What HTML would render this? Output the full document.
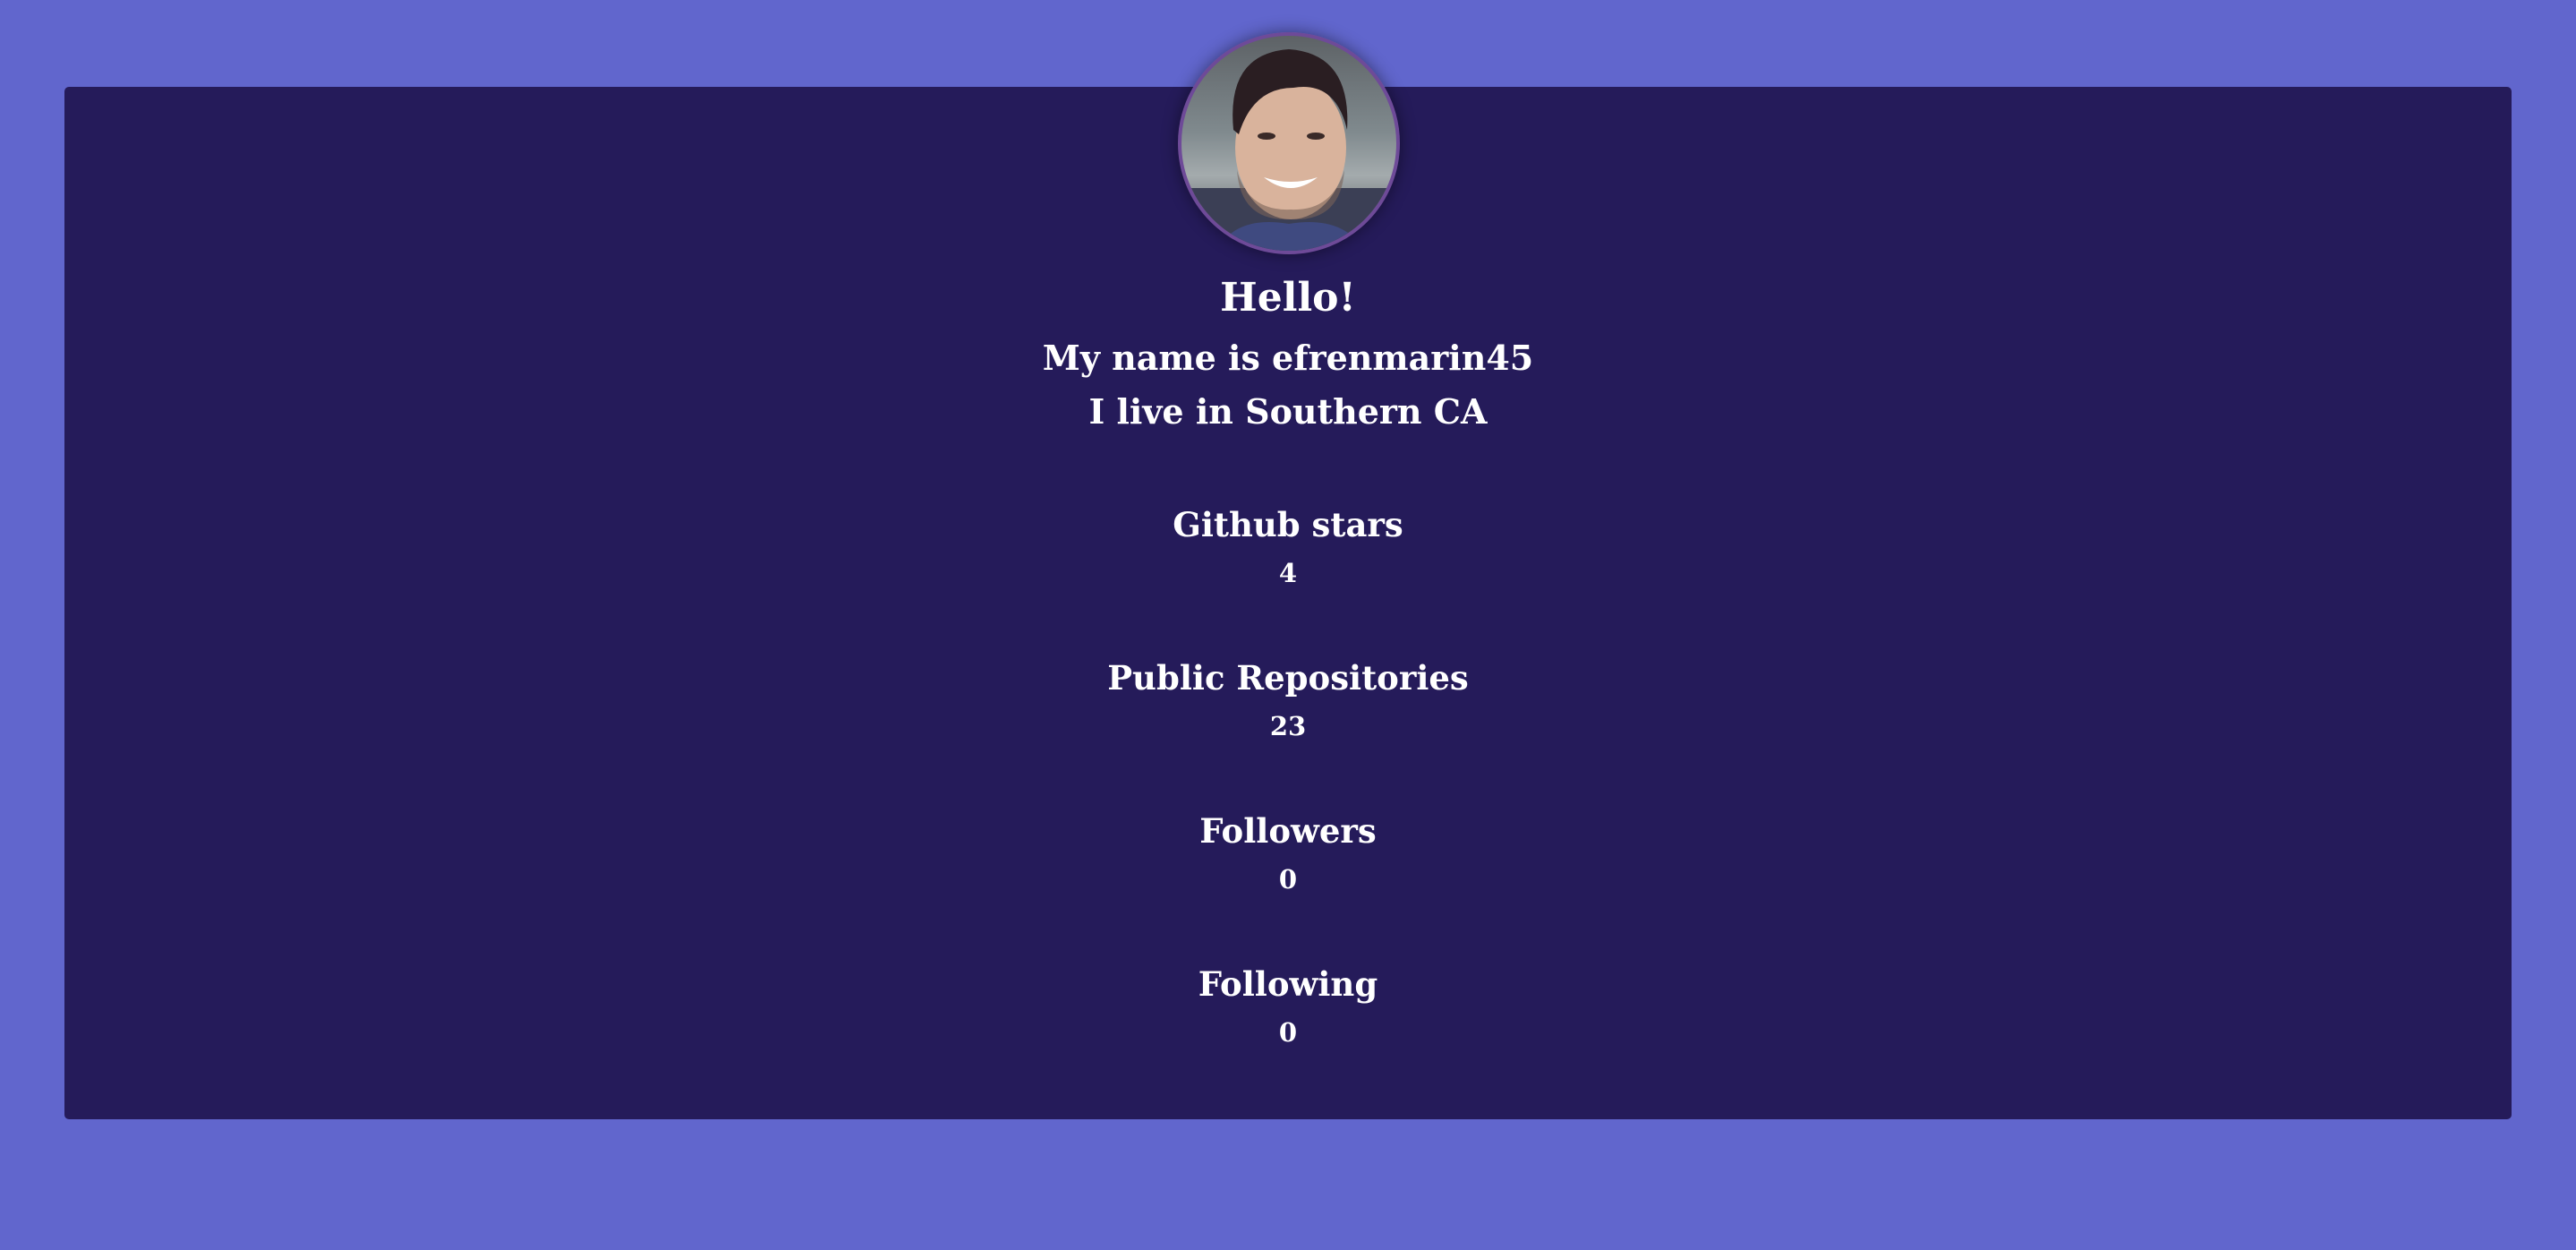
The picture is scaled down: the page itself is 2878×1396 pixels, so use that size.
<!DOCTYPE html>
<html><head><meta charset="utf-8"><style>
html,body{margin:0;padding:0}
body{width:2878px;height:1396px;background:#6166cd;position:relative;overflow:hidden;font-family:"DejaVu Serif","Liberation Serif",serif;font-weight:bold;color:#fff}
.card{position:absolute;left:72px;top:97px;width:2734px;height:1153px;background:#251b5a;border-radius:5px}
.av{position:absolute;left:1316px;top:36px;width:240px;height:240px;border:4px solid #6e4a98;border-radius:50%;overflow:hidden;box-shadow:0 0 18px rgba(0,0,0,.45);background:linear-gradient(180deg,#5d6266 0%,#808a8e 45%,#a4abad 65%,#3e4048 100%)}
.l{position:absolute;left:0;width:2878px;text-align:center;line-height:1;white-space:nowrap}
</style></head><body>
<div class="card"></div>
<div class="av">
<svg width="240" height="240" viewBox="0 0 240 240">
<rect x="0" y="170" width="240" height="70" fill="#3b3f55"/>
<path d="M40 240 Q60 200 120 210 Q180 200 205 240Z" fill="#3f4a80"/>
<ellipse cx="122" cy="125" rx="62" ry="80" fill="#d9b39c"/>
<path d="M58 105 Q50 20 120 15 Q190 20 185 105 Q172 50 125 58 Q80 58 64 110Z" fill="#2a1e22"/>
<ellipse cx="95" cy="112" rx="10" ry="4" fill="#3a2a28"/>
<ellipse cx="150" cy="112" rx="10" ry="4" fill="#3a2a28"/>
<path d="M92 158 Q122 182 152 158 Q122 168 92 158Z" fill="#fff"/>
<path d="M62 150 Q66 208 122 205 Q178 208 182 150 Q168 196 122 194 Q74 196 62 150Z" fill="#7a6258" opacity=".6"/>
</svg>
</div>
<div class="l" style="top:311px;font-size:44px">Hello!</div>
<div class="l" style="top:381px;font-size:38px">My name is efrenmarin45</div>
<div class="l" style="top:441px;font-size:38px">I live in Southern CA</div>
<div class="l" style="top:568px;font-size:37px">Github stars</div>
<div class="l" style="top:626px;font-size:29px">4</div>
<div class="l" style="top:739px;font-size:37px">Public Repositories</div>
<div class="l" style="top:797px;font-size:29px">23</div>
<div class="l" style="top:910px;font-size:37px">Followers</div>
<div class="l" style="top:968px;font-size:29px">0</div>
<div class="l" style="top:1081px;font-size:37px">Following</div>
<div class="l" style="top:1139px;font-size:29px">0</div>
</body></html>
